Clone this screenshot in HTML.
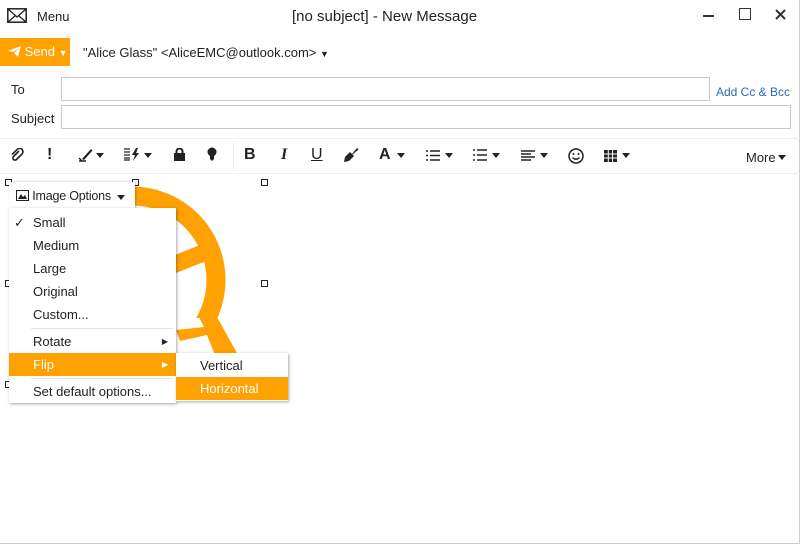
<!DOCTYPE html>
<html><head><meta charset="utf-8"><style>
*{box-sizing:border-box;margin:0;padding:0}
body{width:800px;height:544px;background:#fff;font-family:"Liberation Sans",sans-serif;font-size:13px;color:#222;position:relative;overflow:hidden;border-right:1px solid #ccc;border-bottom:1px solid #ccc}
.a{position:absolute}
.tb{font-size:15px}
.inp{position:absolute;border:1px solid #c8c8c8;height:24px;background:#fff}
.tbar{position:absolute;top:138px;left:0;width:800px;height:36px;border-top:1px solid #eee;border-bottom:1px solid #eee}
.ico{position:absolute;top:146px;font-size:16px;font-weight:bold;color:#222}
.dd{position:absolute;top:153px;width:0;height:0;border-left:4px solid transparent;border-right:4px solid transparent;border-top:5px solid #222}
.h{position:absolute;width:7px;height:7px;border:1px solid #222;background:#fff}
.menu{position:absolute;background:#fff;box-shadow:1px 1px 3px rgba(0,0,0,.35)}
.mi{position:absolute;left:0;right:0;height:23px;line-height:23px;padding-left:24px;font-size:13px}
.sel{background:#ffa100;color:#fff}
</style></head><body>
<svg class="a" style="left:7px;top:8px" width="20" height="15" viewBox="0 0 20 15"><rect x=".8" y=".8" width="18.4" height="13.4" fill="none" stroke="#222" stroke-width="1.5"/><path d="M1 1l9 8 9-8M1 14l7-6M19 14l-7-6" fill="none" stroke="#222" stroke-width="1.3"/></svg>
<div class="a" style="left:37px;top:9px;font-size:13px">Menu</div>
<div class="a tb" style="left:292px;top:8px">[no subject] - New Message</div>
<div class="a" style="left:703px;top:15px;width:11px;height:2px;background:#333"></div>
<div class="a" style="left:739px;top:8px;width:12px;height:12px;border:1.5px solid #333"></div>
<svg class="a" style="left:775px;top:9px" width="11" height="11"><path d="M1 1l9 9M10 1l-9 9" stroke="#333" stroke-width="2"/></svg>
<div class="a" style="left:0;top:38px;width:70px;height:28px;background:#ffa100;color:#fff;font-size:13px;line-height:28px;padding-left:8px">
<svg width="13" height="11" viewBox="0 0 13 11" style="vertical-align:-1px"><path d="M0 5L13 0 10 11 6 7 11 2 5 6z" fill="#fff"/></svg> Send <span style="font-size:9px">▼</span></div>
<div class="a" style="left:83px;top:45px">"Alice Glass" &lt;AliceEMC@outlook.com&gt; <span style="font-size:9px">▼</span></div>
<div class="a" style="left:11px;top:82px">To</div>
<div class="inp" style="left:61px;top:77px;width:649px"></div>
<div class="a" style="left:716px;top:85px;color:#2a6ab5;font-size:12px">Add Cc &amp; Bcc</div>
<div class="a" style="left:11px;top:111px">Subject</div>
<div class="inp" style="left:61px;top:105px;width:730px"></div>
<div class="tbar"></div>
<div class="a" style="left:233px;top:143px;width:1px;height:26px;background:#e6e6e6"></div>
<svg class="a" style="left:10px;top:148px" width="14" height="14"><path d="M9 3L3.5 8.5a2 2 0 003 3L12 6a3.3 3.3 0 00-4.7-4.7L2 6.6" fill="none" stroke="#222" stroke-width="1.6"/></svg>
<div class="ico" style="left:47px">!</div>
<svg class="a" style="left:78px;top:147px" width="16" height="16"><path d="M4 12L13 2l1.5 1.5L6 13z" fill="#222"/><path d="M1 14h7M1 11l3 3" stroke="#222" stroke-width="1.4"/></svg>
<div class="dd" style="left:96px"></div>
<svg class="a" style="left:124px;top:148px" width="18" height="13"><path d="M0 1h6M0 4h6M0 7h6M0 10h6M0 12h6" stroke="#222" stroke-width="1.2"/><path d="M12 0L8 7h3l-2 6 6-8h-3l2-5z" fill="#222"/></svg>
<div class="dd" style="left:144px"></div>
<svg class="a" style="left:174px;top:148px" width="11" height="13"><rect x="0" y="5" width="11" height="8" fill="#222"/><path d="M2.5 5V3.5a3 3 0 016 0V5" fill="none" stroke="#222" stroke-width="2"/></svg>
<svg class="a" style="left:207px;top:147px" width="10" height="14"><circle cx="5" cy="5" r="4.5" fill="#222"/><path d="M3 9h4v3l-2 2-2-2z" fill="#222"/></svg>
<div class="ico" style="left:244px">B</div>
<div class="ico" style="left:281px;font-style:italic;font-family:'Liberation Serif',serif">I</div>
<div class="ico" style="left:311px;text-decoration:underline;font-weight:normal">U</div>
<svg class="a" style="left:343px;top:147px" width="16" height="16"><path d="M9 7l5-6 1.5 1.5-6 5z" fill="#222"/><path d="M2 10l5-5 4 4-5 5z" fill="#222"/><path d="M2 10l-1 5 5-1" fill="#222"/></svg>
<div class="ico" style="left:379px">A</div><div class="dd" style="left:397px"></div>
<svg class="a" style="left:426px;top:150px" width="14" height="11"><path d="M0 1h2M0 5.5h2M0 10h2M4 1h10M4 5.5h10M4 10h10" stroke="#222" stroke-width="1.6"/></svg>
<div class="dd" style="left:445px"></div>
<svg class="a" style="left:473px;top:148px" width="14" height="14"><path d="M0 2h2M0 7h2M0 12h2M4 2h10M4 7h10M4 12h10" stroke="#222" stroke-width="1.6"/></svg>
<div class="dd" style="left:492px"></div>
<svg class="a" style="left:521px;top:150px" width="14" height="11"><path d="M0 1h14M0 4h10M0 7h14M0 10h10" stroke="#222" stroke-width="1.4"/></svg>
<div class="dd" style="left:540px"></div>
<svg class="a" style="left:568px;top:148px" width="16" height="16"><circle cx="8" cy="8" r="7" fill="none" stroke="#222" stroke-width="1.5"/><circle cx="5.5" cy="6" r="1" fill="#222"/><circle cx="10.5" cy="6" r="1" fill="#222"/><path d="M4.5 9.5q3.5 3.5 7 0" fill="none" stroke="#222" stroke-width="1.3"/></svg>
<svg class="a" style="left:604px;top:150px" width="13" height="12"><rect width="13" height="12" fill="#222"/><path d="M4.3 0v12M8.6 0v12M0 4h13M0 8h13" stroke="#fff" stroke-width="1"/></svg>
<div class="dd" style="left:622px"></div>
<div class="a" style="left:746px;top:150px">More</div><div class="dd" style="left:778px;top:155px"></div>
<svg class="a" style="left:0;top:175px" width="300" height="220">
<defs><clipPath id="c"><rect x="132" y="0" width="200" height="143"/></clipPath></defs>
<circle cx="132" cy="105" r="84" fill="none" stroke="#ffa100" stroke-width="19" clip-path="url(#c)"/>
<path d="M170 82L200 70 206 86 176 98z" fill="#ffa100"/>
<path d="M199 142L217 142 238 180 215 180 207 160 180 166 176 155 204 152z" fill="#ffa100"/>
</svg>
<div class="h" style="left:5px;top:179px"></div>
<div class="h" style="left:132px;top:179px"></div>
<div class="h" style="left:261px;top:179px"></div>
<div class="h" style="left:261px;top:280px"></div>
<div class="h" style="left:5px;top:280px"></div>
<div class="h" style="left:5px;top:381px"></div>
<div class="menu" style="left:9px;top:182px;width:126px;height:28px;box-shadow:1px 0 2px rgba(0,0,0,.25)">
<div class="a" style="left:7px;top:7px;font-size:12.5px;letter-spacing:-0.2px"><svg width="13" height="11" style="vertical-align:-1px"><rect x=".5" y=".5" width="12" height="10" fill="none" stroke="#222"/><path d="M2 9l3-5 2 3 2-2 2 4z" fill="#222"/></svg> Image Options</div><div class="dd" style="left:108px;top:13px"></div></div>
<div class="menu" style="left:9px;top:208px;width:167px;height:195px">
<div class="mi" style="top:3px"><span class="a" style="left:5px">✓</span>Small</div>
<div class="mi" style="top:26px">Medium</div>
<div class="mi" style="top:49px">Large</div>
<div class="mi" style="top:72px">Original</div>
<div class="mi" style="top:95px">Custom...</div>
<div class="a" style="left:22px;right:3px;top:120px;height:1px;background:#e4e4e4"></div>
<div class="mi" style="top:122px">Rotate<span class="a" style="right:8px;font-size:8px">▶</span></div>
<div class="mi sel" style="top:145px">Flip<span class="a" style="right:8px;font-size:8px">▶</span></div>
<div class="a" style="left:22px;right:3px;top:170px;height:1px;background:#e4e4e4"></div>
<div class="mi" style="top:172px">Set default options...</div>
</div>
<div class="menu" style="left:176px;top:353px;width:112px;height:48px">
<div class="mi" style="top:1px">Vertical</div>
<div class="mi sel" style="top:24px">Horizontal</div>
</div>
</body></html>
